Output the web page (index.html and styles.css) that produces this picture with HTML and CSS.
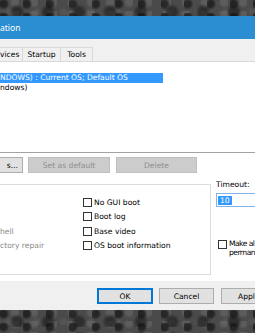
FILE: index.html
```html
<!DOCTYPE html>
<html>
<head>
<meta charset="utf-8">
<link rel="stylesheet" href="styles.css">
</head>
<body>
<div class="screen">
  <div class="wall wall-top"></div>
  <div class="window">
    <div class="titlebar"><span>ation</span></div>
    <div class="tabs">
      <div class="tab tab1">vices</div>
      <div class="tab tab2">Startup</div>
      <div class="tab tab3">Tools</div>
    </div>
    <div class="page">
      <div class="listbox">
        <div class="row sel">NDOWS) : Current OS; Default OS</div>
        <div class="row">ndows)</div>
      </div>
      <div class="btnrow">
        <button class="btn b-adv">s...</button>
        <button class="btn dis b-def">Set as default</button>
        <button class="btn dis b-del">Delete</button>
      </div>
      <div class="lower">
        <div class="group">
          <div class="col-left">
            <div class="opt"></div>
            <div class="opt"></div>
            <div class="opt dim">hell</div>
            <div class="opt dim">ctory repair</div>
          </div>
          <div class="col-right">
            <div class="opt"><span class="cb"></span>No GUI boot</div>
            <div class="opt"><span class="cb"></span>Boot log</div>
            <div class="opt"><span class="cb"></span>Base video</div>
            <div class="opt"><span class="cb"></span>OS boot information</div>
          </div>
        </div>
        <div class="side">
          <div class="lbl">Timeout:</div>
          <div class="input"><span class="selt">10</span></div>
          <div class="perm"><span class="cb"></span><span class="perm-text">Make al<br>perman</span></div>
        </div>
      </div>
    </div>
    <div class="footer">
      <button class="btn ok">OK</button>
      <button class="btn cancel">Cancel</button>
      <button class="btn apply">Appl</button>
    </div>
  </div>
  <div class="wall wall-bottom"></div>
</div>
</body>
</html>
```
FILE: styles.css
```css
html, body {
  margin: 0;
  padding: 0;
}
body {
  width: 255px;
  height: 333px;
  overflow: hidden;
  background: #474747;
  font-family: "DejaVu Sans", sans-serif;
  font-size: 7.6px;
  color: #000;
}
.screen {
  display: flex;
  flex-direction: column;
  height: 333px;
}
.wall {
  background-color: #4a4a4a;
  background-image:
    radial-gradient(circle at 15% 30%, rgba(20,20,20,0.7) 0 3px, transparent 6px),
    radial-gradient(circle at 55% 70%, rgba(25,25,25,0.6) 0 4px, transparent 8px),
    radial-gradient(circle at 80% 20%, rgba(110,110,110,0.5) 0 3px, transparent 6px),
    radial-gradient(circle at 35% 80%, rgba(100,100,100,0.4) 0 2px, transparent 5px);
  background-size: 23px 13px, 31px 17px, 19px 11px, 27px 15px;
}
.wall-top {
  height: 16px;
  flex: none;
}
.wall-bottom {
  flex: 1;
}
.window {
  display: flex;
  flex-direction: column;
  flex: none;
  background: #f0f0f0;
}
.titlebar {
  height: 23px;
  background: #2b8dd2;
  color: #fff;
  font-family: "Noto Sans", sans-serif;
  font-size: 8.5px;
  display: flex;
  align-items: center;
}
.tabs {
  height: 22px;
  display: flex;
  align-items: flex-end;
  background: #f0f0f0;
}
.tab {
  height: 14px;
  box-sizing: border-box;
  border: 1px solid #d9d9d9;
  border-bottom: none;
  display: flex;
  align-items: center;
  justify-content: center;
  background: #f0f0f0;
  white-space: nowrap;
}
.tab1 {
  width: 23px;
  border-left: none;
  justify-content: flex-start;
}
.tab2 {
  width: 39px;
  margin-left: -1px;
}
.tab3 {
  width: 33px;
  margin-left: -1px;
}
.page {
  height: 220px;
  box-sizing: border-box;
  background: #fff;
  border-top: 1px solid #d9d9d9;
  display: flex;
  flex-direction: column;
}
.listbox {
  height: 91px;
  box-sizing: border-box;
  padding-top: 11px;
  border-bottom: 1px solid #a3a3a3;
  flex: none;
}
.row {
  height: 10px;
  line-height: 10px;
  white-space: nowrap;
}
.row.sel {
  width: 163px;
  background: #3399ff;
  color: #fff;
}
.btnrow {
  display: flex;
  margin-top: 4px;
  height: 16px;
  flex: none;
}
.btn {
  box-sizing: border-box;
  height: 16px;
  margin: 0;
  padding: 0;
  background: #e1e1e1;
  border: 1px solid #adadad;
  font: inherit;
  color: #000;
  display: flex;
  align-items: center;
  justify-content: center;
  white-space: nowrap;
  flex: none;
}
.btn.dis {
  background: #cccccc;
  border-color: #bfbfbf;
  color: #8f8f8f;
}
.b-adv {
  width: 23px;
  border-left: none;
  justify-content: flex-end;
  padding-right: 4px;
}
.b-def {
  margin-left: 5px;
  width: 82px;
}
.b-del {
  margin-left: 6px;
  width: 81px;
}
.lower {
  display: flex;
  margin-top: 7px;
  flex: none;
}
.group {
  margin-top: 4px;
  width: 211px;
  height: 91px;
  box-sizing: border-box;
  border: 1px solid #dcdcdc;
  border-left: none;
  display: flex;
  padding-top: 10px;
  flex: none;
}
.col-left {
  width: 83px;
  flex: none;
}
.opt {
  height: 14.5px;
  display: flex;
  align-items: center;
  white-space: nowrap;
}
.dim {
  color: #8a8a8a;
}
.cb {
  display: inline-block;
  width: 9px;
  height: 9px;
  box-sizing: border-box;
  border: 1px solid #333;
  background: #fff;
  margin-right: 2px;
  flex: none;
}
.side {
  padding-left: 5px;
  display: flex;
  flex-direction: column;
  white-space: nowrap;
}
.lbl {
  height: 10px;
  line-height: 10px;
}
.input {
  margin-top: 3px;
  height: 14px;
  width: 60px;
  box-sizing: border-box;
  border: 1px solid #7eb4ea;
  display: flex;
  align-items: center;
  padding-left: 1px;
}
.selt {
  background: #3399ff;
  color: #fff;
  padding: 0 2px;
  line-height: 9px;
}
.perm {
  margin-top: 31px;
  padding-left: 2px;
  display: flex;
  align-items: flex-start;
}
.perm .cb {
  margin-top: 2px;
}
.perm-text {
  line-height: 9px;
  margin-top: 0.5px;
  letter-spacing: -0.55px;
}
.footer {
  height: 29px;
  box-sizing: border-box;
  background: #f0f0f0;
  display: flex;
  padding-top: 7px;
  padding-left: 97px;
}
.ok {
  width: 56px;
  border-color: #0078d7;
  box-shadow: inset 0 0 0 1px #0078d7;
}
.cancel {
  width: 55px;
  margin-left: 6px;
}
.apply {
  width: 34px;
  margin-left: 7px;
  border-right: none;
  justify-content: flex-start;
  padding-left: 16px;
}
```
